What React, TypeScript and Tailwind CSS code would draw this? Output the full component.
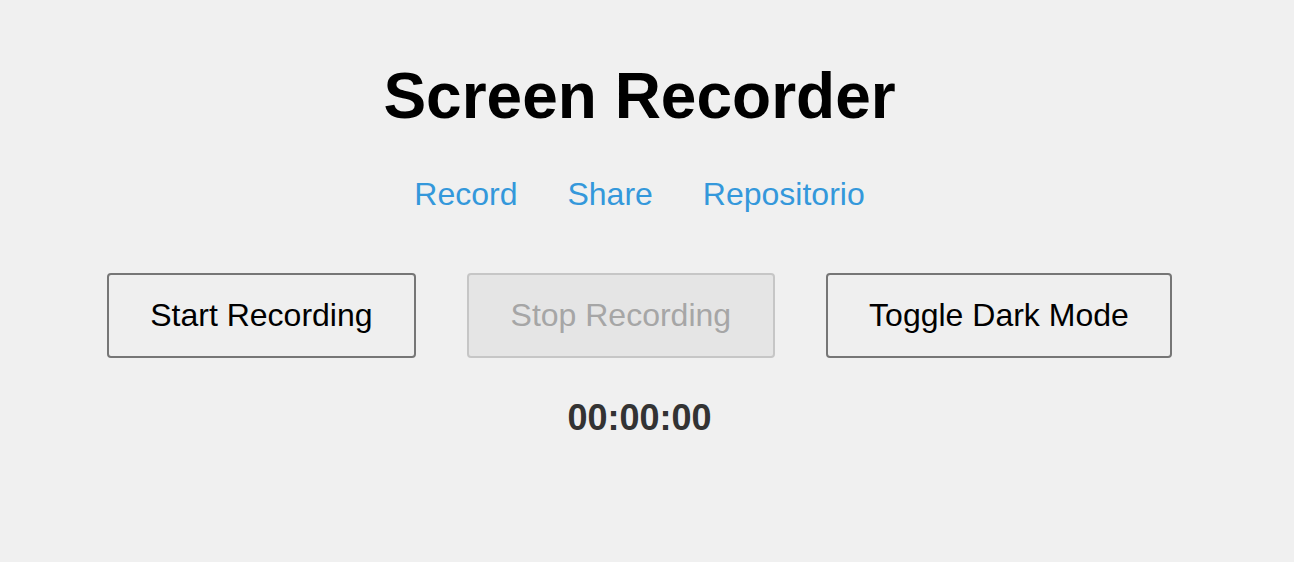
import React from "react";

const App: React.FC = () => {
  return (
    <div
      className="min-h-screen w-full bg-[#f0f0f0] pr-[15px] text-black"
      style={{ fontFamily: '"Liberation Sans", Arial, sans-serif' }}
    >
      <div className="flex flex-col items-center pt-[60px]">
        <h1 className="text-[64px] font-bold leading-[1.15]">Screen Recorder</h1>

        <nav className="mt-[42px] flex gap-[50px] text-[32px] leading-[1.15]">
          <a href="#" className="text-[#3498db]">
            Record
          </a>
          <a href="#" className="text-[#3498db]">
            Share
          </a>
          <a href="#" className="text-[#3498db]">
            Repositorio
          </a>
        </nav>

        <div className="mt-[61px] flex gap-[51px]">
          <button className="rounded-[4px] border-2 border-[#767676] bg-[#efefef] px-[41px] py-[22px] text-[32px] leading-[1.15] text-black">
            Start Recording
          </button>
          <button
            disabled
            className="rounded-[4px] border-2 border-[#c6c6c6] bg-[#e5e5e5] px-[42px] py-[22px] text-[32px] leading-[1.15] text-[#a6a6a6]"
          >
            Stop Recording
          </button>
          <button className="rounded-[4px] border-2 border-[#767676] bg-[#efefef] px-[41px] py-[22px] text-[32px] leading-[1.15] text-black">
            Toggle Dark Mode
          </button>
        </div>

        <div className="mt-[39px] text-[36px] font-bold leading-[1.15] text-[#333]">
          00:00:00
        </div>
      </div>
    </div>
  );
};

export default App;
